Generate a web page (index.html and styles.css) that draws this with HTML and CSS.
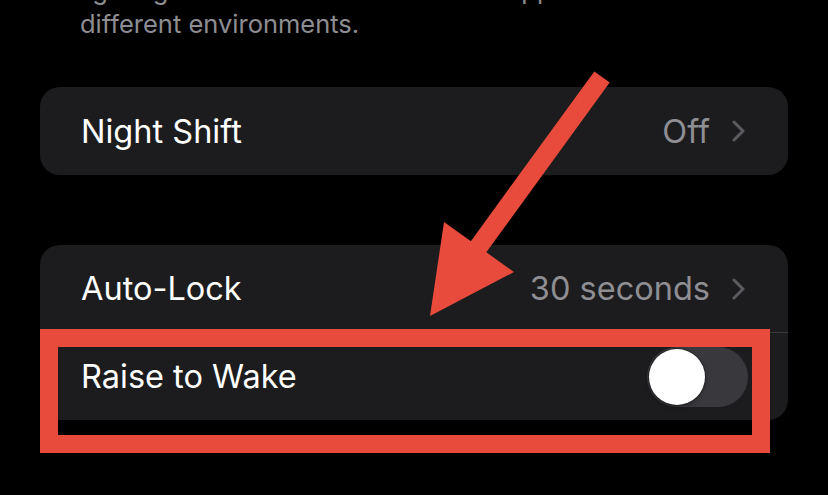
FILE: index.html
```html
<!DOCTYPE html>
<html lang="en">
<head>
  <meta charset="UTF-8" />
  <meta name="viewport" content="width=device-width, initial-scale=1.0" />
  <title>Display &amp; Brightness</title>
  <link rel="stylesheet" href="styles.css">
</head>
<body>
  <div class="screen">
    <p class="footnote">lighting conditions to make colours appear consistent in<br>different environments.</p>

    <div class="group">
      <div class="row row-single">
        <span class="label">Night Shift</span>
        <span class="value">Off</span>
        <svg class="chevron" viewBox="0 0 14 22"><polyline points="2,2 11,11 2,20" /></svg>
      </div>
    </div>

    <div class="group">
      <div class="row">
        <span class="label">Auto-Lock</span>
        <span class="value">30 seconds</span>
        <svg class="chevron" viewBox="0 0 14 22"><polyline points="2,2 11,11 2,20" /></svg>
      </div>
      <div class="row">
        <span class="label">Raise to Wake</span>
        <span class="switch"><span class="knob"></span></span>
      </div>
    </div>

    <!-- annotation drawn over the screenshot -->
    <div class="highlight"></div>
    <svg class="arrow" viewBox="0 0 828 495">
      <line x1="602" y1="77" x2="474" y2="253" />
      <polygon points="430,316 444,222 514,272" />
    </svg>
  </div>
</body>
</html>
```

FILE: styles.css
```css
body {
  margin: 0;
  background: #000;
  font-family: Inter, 'Noto Sans', sans-serif;
  color: #fff;
  overflow: hidden;
}
.screen {
  position: relative;
  display: flow-root;
  width: 828px;
  height: 495px;
  padding: 0 40px;
  box-sizing: border-box;
}
.footnote {
  margin: -27px 0 0;
  padding-left: 40px;
  font-size: 25.5px;
  line-height: 34px;
  color: #8d8d92;
}
.group {
  background: #1c1c1e;
  border-radius: 20px;
  margin-top: 46px;
  overflow: hidden;
}
.group + .group {
  margin-top: 70px;
}
.row {
  display: flex;
  align-items: center;
  height: 87px;
  padding: 0 42px 0 41px;
  position: relative;
}
.row-single {
  height: 88px;
}
.row + .row {
  border-top: 1px solid #38383a;
}
.label {
  flex: 1;
  font-size: 32.5px;
}
.value {
  font-size: 32.5px;
  color: #8e8e93;
}
.chevron {
  width: 14px;
  height: 22px;
  margin-left: 22px;
  fill: none;
  stroke: #5b5b5f;
  stroke-width: 3;
  stroke-linecap: round;
  stroke-linejoin: round;
}
.switch {
  width: 101px;
  height: 60px;
  border-radius: 30px;
  background: #39393d;
  margin-right: -2px;
  display: flex;
  align-items: center;
  padding: 2px;
  box-sizing: border-box;
}
.knob {
  width: 56px;
  height: 56px;
  border-radius: 50%;
  background: #fff;
  box-shadow: 0 0 0 1px rgba(0,0,0,0.25), 0 2px 4px rgba(0,0,0,0.3);
}
.highlight {
  position: absolute;
  left: 40px;
  top: 329px;
  width: 730px;
  height: 124px;
  border: 18px solid #e84b3b;
  box-sizing: border-box;
}
.arrow {
  position: absolute;
  left: 0;
  top: 0;
  width: 828px;
  height: 495px;
}
.arrow line {
  stroke: #e84b3b;
  stroke-width: 19;
}
.arrow polygon {
  fill: #e84b3b;
}
```
